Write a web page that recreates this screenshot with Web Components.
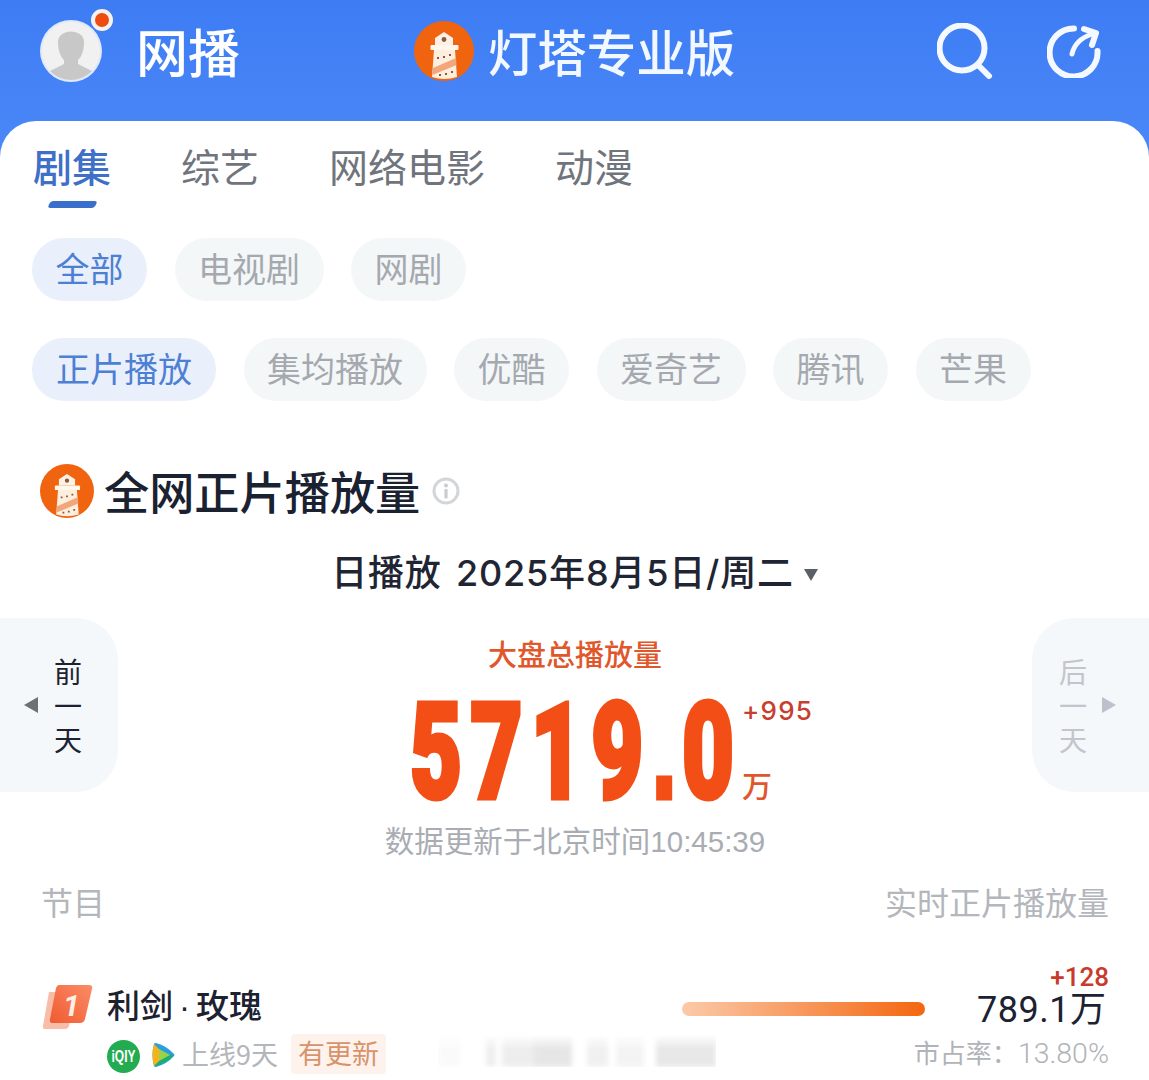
<!DOCTYPE html>
<html lang="zh">
<head>
<meta charset="utf-8">
<title>灯塔专业版</title>
<style>
  html, body { margin: 0; background: #fff; }
  body { font-family: "Noto Sans CJK SC", "Noto Sans", sans-serif; color: #1c2230; width: 1149px; height: 1080px; overflow: hidden; }
</style>
</head>
<body>
<template id="logo-tpl">
  <style>
    :host { display: block; width: var(--size, 60px); height: var(--size, 60px); flex: none; }
    svg { display: block; width: 100%; height: 100%; }
  </style>
  <svg viewBox="0 0 60 60">
    <circle cx="30" cy="30" r="30" fill="#f0640f"/>
    <path d="M30 11 L39 17 V24 H21 V17 Z" fill="#fdf1e6"/>
    <circle cx="30" cy="18.5" r="2.4" fill="#8a5a3c"/>
    <rect x="16.5" y="24" width="28" height="5" rx="1" fill="#fff6ec"/>
    <path d="M20 29 H41 L43 56 Q30 60 18 56 Z" fill="#fdeede"/>
    <path d="M19 47 L42 37 L42.6 44 L18.4 54 Z" fill="#f2a67c"/>
    <path d="M23 36 h2 v2 h-2z M29 35 h2 v2 h-2z M35 33 h2 v2 h-2z M25 53 h2 v2 h-2z M31 52 h2 v2 h-2z M37 50 h2 v2 h-2z" fill="#8a5a3c"/>
  </svg>
</template>

<template id="header-tpl">
  <style>
    :host { display: grid; grid-template-columns: 1fr auto 1fr; align-items: center; height: 121px; padding: 0 48px 20px 40px; box-sizing: border-box; color: #fff; }
    .left { display: flex; align-items: center; gap: 34px; }
    .avatar { position: relative; width: 62px; height: 62px; flex: none; }
    .avatar svg { display: block; }
    .dot { position: absolute; right: -11px; top: -11px; width: 14px; height: 14px; border-radius: 50%; background: #ee4d12; border: 4px solid #f6f3ef; }
    .name { font-size: 52px; line-height: 64px; font-weight: 500; }
    .mid { display: flex; align-items: center; gap: 14px; --size: 60px; margin-left: 8px; }
    .brand { font-size: 49.5px; line-height: 60px; font-weight: 500; color: #f2f8ff; }
    .right { display: flex; justify-content: flex-end; align-items: center; gap: 54px; }
    .right svg { display: block; }
  </style>
  <div class="left">
    <div class="avatar">
      <svg width="62" height="62" viewBox="0 0 62 62">
        <defs><clipPath id="av"><circle cx="31" cy="31" r="29"/></clipPath></defs>
        <circle cx="31" cy="31" r="31" fill="#dfe9fb"/>
        <circle cx="31" cy="31" r="29" fill="#f1f1f1"/>
        <g clip-path="url(#av)" fill="#c8c8c8">
          <path d="M18 22 C18 8 44 8 44 22 C44 30 42 36 38 40 V44 L52 51 V62 H10 V51 L24 44 V40 C20 36 18 30 18 22 Z"/>
        </g>
      </svg>
      <span class="dot"></span>
    </div>
    <span class="name">网播</span>
  </div>
  <div class="mid"><lt-logo></lt-logo><span class="brand">灯塔专业版</span></div>
  <div class="right">
    <svg width="56" height="56" viewBox="0 0 56 56" fill="none" stroke="#f4f8ff" stroke-width="6" stroke-linecap="round">
      <circle cx="25" cy="25" r="22.5"/>
      <path d="M42 43 L52 53"/>
    </svg>
    <svg width="54" height="54" viewBox="0 0 54 54" fill="none" stroke="#f4f8ff" stroke-linecap="round" stroke-linejoin="round">
      <path stroke-width="6" d="M50.5 27 A24 24 0 1 1 27 4.5"/>
      <path stroke-width="5" d="M25 30 C27 21 33 14 45 10"/>
      <path stroke-width="6" d="M37 5 L49 9 L45 21"/>
    </svg>
  </div>
</template>

<template id="tabs-tpl">
  <style>
    :host { display: flex; gap: 70px; padding: 16px 0 0 33px; height: 94px; box-sizing: border-box; }
  </style>
  <slot></slot>
</template>

<template id="tab-tpl">
  <style>
    :host { display: flex; flex-direction: column; align-items: center; font-size: 39px; line-height: 56px; color: #70747c; }
    :host([active]) { color: #3f6fc7; font-weight: 500; }
    .bar { width: 47px; height: 7px; margin-top: 8px; border-radius: 3px; transform: skewX(-25deg); }
    :host([active]) .bar { background: #3b6fcc; }
  </style>
  <slot></slot>
  <div class="bar"></div>
</template>

<template id="chips-tpl">
  <style>
    :host { display: flex; gap: 27.5px; padding-left: 32px; margin-top: var(--top, 0); }
  </style>
  <slot></slot>
</template>

<template id="chip-tpl">
  <style>
    :host { display: block; height: 63px; line-height: 60px; padding: 0 23.5px; border-radius: 32px; font-size: 34px; background: #f4f7f8; color: #a5a9af; }
    :host([active]) { background: #e9f0fb; color: #4d7fd4; }
  </style>
  <slot></slot>
</template>

<template id="title-tpl">
  <style>
    :host { display: flex; align-items: center; height: 54px; margin-top: 63px; padding-left: 40px; --size: 54px; }
    .t { font-size: 45.2px; line-height: 52px; font-weight: 500; margin-left: 10px; color: #1a2130; }
    svg { display: block; margin-left: 12px; }
  </style>
  <lt-logo></lt-logo>
  <span class="t"><slot></slot></span>
  <svg width="28" height="28" viewBox="0 0 28 28" fill="none">
    <circle cx="14" cy="14" r="12" stroke="#d3d6d9" stroke-width="3"/>
    <circle cx="14" cy="8.5" r="2" fill="#c9ccd0"/>
    <rect x="12.4" y="12" width="3.2" height="9.5" rx="1" fill="#c9ccd0"/>
  </svg>
</template>

<template id="date-tpl">
  <style>
    :host { display: flex; justify-content: center; align-items: center; gap: 10px; height: 50px; margin-top: 30px; font: 500 36px/46px Inter, "Noto Sans CJK SC", sans-serif; word-spacing: 4px; letter-spacing: .8px; color: #1f2533; }
    i { width: 0; height: 0; border-left: 7px solid transparent; border-right: 7px solid transparent; border-top: 12px solid #5b6068; margin-top: 3px; }
  </style>
  <span><slot></slot></span><i></i>
</template>

<template id="daynav-tpl">
  <style>
    :host { display: flex; align-items: center; justify-content: flex-end; flex: none; width: 118px; height: 174px; box-sizing: border-box; background: #f4f8fa; border-radius: 0 42px 42px 0; padding-right: 36px; gap: 16px; color: #1c2230; font-size: 28px; }
    :host([next]) { flex-direction: row-reverse; justify-content: flex-end; width: 117px; border-radius: 42px 0 0 42px; padding: 0 0 0 27px; gap: 15px; color: #c2c5cc; }
    .w { display: flex; flex-direction: column; line-height: 34px; }
    i { width: 0; height: 0; border-top: 8px solid transparent; border-bottom: 8px solid transparent; border-right: 14px solid #6c7077; }
    :host([next]) i { border-right: 0; border-left: 14px solid #bcc1cc; }
  </style>
  <i></i>
  <div class="w"><span>前</span><span>一</span><span>天</span></div>
</template>

<template id="total-tpl">
  <style>
    :host { display: flex; flex-direction: column; align-items: center; flex: 1; padding-top: 15px; }
    .label { font-size: 29px; line-height: 40px; font-weight: 500; color: #e0572c; }
    .row { display: flex; width: 100%; height: 147px; box-sizing: border-box; padding-left: 292px; }
    .num { width: 332px; height: 147px; flex: none; padding-top: 9px; box-sizing: border-box; font: 900 134px/140px Roboto, "Liberation Sans", sans-serif; -webkit-text-stroke: 5px #f24e16; letter-spacing: 12.5px; color: #f24e16; transform: scaleX(.67); transform-origin: 0 0; white-space: nowrap; }
    .num span { font-family: "Liberation Sans", sans-serif; font-weight: 700; letter-spacing: 8px; }
    .side { display: flex; flex-direction: column; justify-content: space-between; padding: 18px 0 18px; box-sizing: border-box; height: 147px; }
    .plus { font: 500 26px/40px Inter, "Noto Sans", sans-serif; color: #c6402f; letter-spacing: 1.2px; }
    .unit { font-size: 30px; line-height: 36px; color: #e0572c; font-weight: 500; }
    .upd { font-size: 29.5px; line-height: 38px; color: #a9adb3; }
    .upd b { font: 400 29.5px "Liberation Sans", sans-serif; }
  </style>
  <div class="label">大盘总播放量</div>
  <div class="row">
    <div class="num">5719<span>.</span>0</div>
    <div class="side"><span class="plus">+995</span><span class="unit">万</span></div>
  </div>
  <div class="upd">数据更新于北京时间<b>10:45:39</b></div>
</template>

<template id="thead-tpl">
  <style>
    :host { display: flex; justify-content: space-between; height: 40px; line-height: 36px; margin-top: 22px; padding: 0 40px 0 41px; font-size: 32px; color: #b3b6bb; }
  </style>
  <span>节目</span><span>实时正片播放量</span>
</template>

<template id="row-tpl">
  <style>
    :host { display: grid; grid-template-columns: 65px 1fr 243px 184px; height: 117px; margin-top: 37px; padding: 0 40px 0 42px; position: relative; }
    .rank { padding-top: 25px; }
    .rank svg { display: block; }
    .info { padding-top: 22px; }
    .nm { font-size: 33px; line-height: 44px; font-weight: 500; color: #1c2230; }
    .sub { display: flex; align-items: center; height: 40px; margin-top: 5px; }
    .sub svg { display: block; flex: none; }
    .on { font-size: 27px; color: #b3b6bb; margin-left: 7px; line-height: 38px; white-space: nowrap; }
    .tag { font-size: 27px; line-height: 38px; height: 40px; color: #d8936d; background: #fdf3ec; padding: 0 7px; margin-left: 13px; border-radius: 4px; white-space: nowrap; }
    .bar { height: 14px; margin-top: 42px; border-radius: 7px; background: linear-gradient(90deg, #fbcaa9, #f4660f); }
    .vals { text-align: right; display: flex; flex-direction: column; align-items: flex-end; padding-top: 3px; }
    .up { font: 500 26px/28px Roboto, sans-serif; color: #c93a2d; }
    .val { font: 400 36px/42px Roboto, sans-serif; letter-spacing: .5px; color: #1c2230; margin-right: 3px; margin-top: -6px; }
    .val span { font-family: "Noto Sans CJK SC", sans-serif; letter-spacing: 0; }
    .share { font-size: 26px; line-height: 36px; color: #b0b3b8; margin-top: 3px; white-space: nowrap; }
    .share b { font: 300 28.5px Roboto, sans-serif; }
    .smudge { position: absolute; left: 438px; top: 74px; width: 278px; height: 33px; filter: blur(2.5px); opacity: .85;
      -webkit-mask-image: linear-gradient(180deg, transparent, #000 45%);
      background: linear-gradient(90deg, #fafafa 0 22px, #fff 22px 48px, #ececec 48px 58px, #fff 58px 64px, #ebebeb 64px 96px, #e2e2e2 96px 134px, #fff 134px 149px, #eee 149px 170px, #fff 170px 178px, #f2f2f2 178px 206px, #fff 206px 218px, #e4e4e4 218px 278px); }
  </style>
  <div class="rank">
    <svg width="52" height="46" viewBox="0 0 52 46">
      <defs><linearGradient id="rk" x1="0" y1="1" x2="1" y2="0"><stop offset="0" stop-color="#f05a31"/><stop offset="1" stop-color="#fb8c66"/></linearGradient></defs>
      <path d="M7 7 H32 Q35 7 34 10 L27 41 Q26 44 23 44 H3 Q0 44 1 41 Z" fill="#f8bda9"/>
      <path d="M17 0 H47 Q51 0 50 4 L43 34 Q42 38 38 38 H11 Q7 38 8 34 L14 3 Q15 0 17 0 Z" fill="url(#rk)"/>
      <text x="21" y="31" font-family="Roboto" font-style="italic" font-weight="700" font-size="30" fill="#fdeee8">1</text>
    </svg>
  </div>
  <div class="info">
    <div class="nm"><slot name="name"></slot></div>
    <div class="sub">
      <svg width="33" height="33" viewBox="0 0 33 33" style="margin-top:4px">
        <circle cx="16.5" cy="16.5" r="16.5" fill="#23ab52"/>
        <text transform="translate(16.5 21.5) scale(1 1.3)" text-anchor="middle" font-family="Liberation Sans" font-weight="700" font-size="12" fill="#fff">iQIY</text>
      </svg>
      <svg width="24" height="26" viewBox="0 0 24 26" style="margin:2px 0 0 11px">
        <path d="M3 2 Q3 1 5 1 Q16 4 23 12 Q24 13 23 14 Q16 22 5 25 Q3 25 3 24 Q0 13 3 2 Z" fill="#2a9fe0"/>
        <path d="M3 24 Q15 22 23 13 L9 13 Z" fill="#1dae6b"/>
        <path d="M3 2 Q0 13 3 24 L9 18 V8 Z" fill="#f6b21c"/>
        <path d="M8 7 L19 13 L8 19 Z" fill="#9ad34a"/>
      </svg>
      <span class="on"><slot name="days"></slot></span>
      <span class="tag"><slot name="tag"></slot></span>
    </div>
  </div>
  <div class="bar"></div>
  <div class="vals">
    <div class="up"><slot name="up"></slot></div>
    <div class="val"><slot name="val"></slot><span>万</span></div>
    <div class="share">市占率：<b><slot name="share"></slot></b></div>
  </div>
  <div class="smudge"></div>
</template>

<app-shell>
  <app-header></app-header>
  <content-card>
    <type-tabs>
      <type-tab active>剧集</type-tab>
      <type-tab>综艺</type-tab>
      <type-tab>网络电影</type-tab>
      <type-tab>动漫</type-tab>
    </type-tabs>
    <chip-row style="--top:23px">
      <filter-chip active>全部</filter-chip>
      <filter-chip>电视剧</filter-chip>
      <filter-chip>网剧</filter-chip>
    </chip-row>
    <chip-row style="--top:37px">
      <filter-chip active style="padding:0 24px">正片播放</filter-chip>
      <filter-chip>集均播放</filter-chip>
      <filter-chip>优酷</filter-chip>
      <filter-chip>爱奇艺</filter-chip>
      <filter-chip>腾讯</filter-chip>
      <filter-chip>芒果</filter-chip>
    </chip-row>
    <section-title>全网正片播放量</section-title>
    <date-line>日播放 2025年8月5日/周二</date-line>
    <hero-band>
      <day-nav></day-nav>
      <total-panel></total-panel>
      <day-nav next></day-nav>
    </hero-band>
    <rank-head></rank-head>
    <rank-row>
      <span slot="name">利剑<span style="font-family:'Liberation Sans';margin:0 6px">·</span>玫瑰</span>
      <span slot="days">上线9天</span>
      <span slot="tag">有更新</span>
      <span slot="up">+128</span>
      <span slot="val">789.1</span>
      <span slot="share">13.80%</span>
    </rank-row>
  </content-card>
</app-shell>

<script>
  // shared helper: clone a template into an open shadow root
  function tplElement(name, tplId, onMount) {
    customElements.define(name, class extends HTMLElement {
      connectedCallback() {
        if (this.shadowRoot) return;
        this.attachShadow({ mode: 'open' });
        this.shadowRoot.appendChild(document.getElementById(tplId).content.cloneNode(true));
        if (onMount) onMount(this);
      }
    });
  }

  function inlineElement(name, css) {
    customElements.define(name, class extends HTMLElement {
      connectedCallback() {
        this.attachShadow({ mode: 'open' });
        this.shadowRoot.innerHTML = `<style>${css}</style><slot></slot>`;
      }
    });
  }

  inlineElement('app-shell', ':host{display:block;width:1149px;height:1080px;overflow:hidden;background:linear-gradient(180deg,#3e7cf4,#4b88f8 160px)}');
  inlineElement('content-card', ':host{display:block;height:959px;background:#fff;border-radius:36px 36px 0 0}');
  inlineElement('hero-band', ':host{display:flex;align-items:flex-start;margin-top:20px;height:243px}');

  tplElement('lt-logo', 'logo-tpl');
  tplElement('app-header', 'header-tpl');
  tplElement('type-tabs', 'tabs-tpl');
  tplElement('type-tab', 'tab-tpl');
  tplElement('chip-row', 'chips-tpl');
  tplElement('filter-chip', 'chip-tpl');
  tplElement('section-title', 'title-tpl');
  tplElement('date-line', 'date-tpl');
  tplElement('day-nav', 'daynav-tpl', el => {
    if (!el.hasAttribute('next')) return;
    el.shadowRoot.querySelector('.w').innerHTML = '<span>后</span><span>一</span><span>天</span>';
  });
  tplElement('total-panel', 'total-tpl');
  tplElement('rank-head', 'thead-tpl');
  tplElement('rank-row', 'row-tpl');
</script>
</body>
</html>
